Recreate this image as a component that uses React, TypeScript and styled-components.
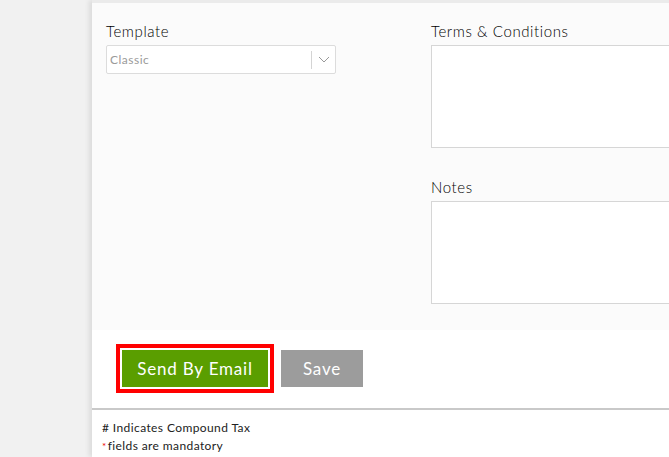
import React from "react";
import styled, { createGlobalStyle } from "styled-components";

const Global = createGlobalStyle`
  html, body { margin: 0; padding: 0; }
  body {
    background: #f1f1f1;
    font-family: Lato, "Open Sans", "Liberation Sans", sans-serif;
    overflow: hidden;
    width: 669px;
    height: 457px;
  }
`;

const Page = styled.div`
  display: flex;
  height: 457px;
  width: 669px;
  overflow: hidden;
`;

const Gutter = styled.div`
  width: 92px;
  flex: none;
  background: #f1f1f1;
`;

const Panel = styled.div`
  flex: 1;
  min-width: 0;
  display: flex;
  flex-direction: column;
  background: #ffffff;
  border-top: 3px solid #ebebeb;
  box-shadow: -3px 0 5px rgba(0, 0, 0, 0.09);
  overflow: hidden;
`;

const FormBody = styled.div`
  background: #fbfbfb;
  padding: 19px 0 26px 14px;
  display: grid;
  grid-template-columns: 230px 300px;
  column-gap: 95px;
  align-items: start;
`;

const Column = styled.div`
  display: flex;
  flex-direction: column;
`;

const Label = styled.label<{ $spaced?: boolean }>`
  font-size: 15px;
  line-height: 18px;
  font-weight: 300;
  color: #000;
  letter-spacing: 0.6px;
  margin-top: ${(p) => (p.$spaced ? "30px" : "0")};
  margin-bottom: 5px;
`;

const Select = styled.div`
  height: 29px;
  box-sizing: border-box;
  border: 1px solid #dcdcdc;
  border-radius: 2px;
  background: #fff;
  display: flex;
  align-items: center;
`;

const SelectText = styled.span`
  flex: 1;
  font-size: 12px;
  color: #9a9a9a;
  padding-left: 3px;
  letter-spacing: 0.5px;
`;

const Caret = styled.span`
  width: 23px;
  height: 18px;
  border-left: 1px solid #d4d4d4;
  display: flex;
  align-items: center;
  justify-content: center;
`;

const TextArea = styled.div<{ $h: number }>`
  height: ${(p) => p.$h}px;
  box-sizing: border-box;
  border: 1px solid #d6d6d6;
  background: #fff;
  width: 300px;
`;

const ButtonBar = styled.div`
  padding: 20px 0 21px 30px;
  display: flex;
  align-items: center;
  gap: 13px;
  border-bottom: 2px solid #c9c9c9;
`;

const Button = styled.button<{ $primary?: boolean }>`
  height: 37px;
  border: none;
  border-radius: 0;
  font-family: inherit;
  font-size: 17px;
  letter-spacing: 0.8px;
  color: #fff;
  background: ${(p) => (p.$primary ? "#5a9e00" : "#9c9c9c")};
  padding: 0;
  width: ${(p) => (p.$primary ? "146px" : "82px")};
  cursor: pointer;
  ${(p) => p.$primary && `outline: 4px solid #ff0000; outline-offset: 2px;`}
`;

const Footer = styled.div`
  padding: 9px 10px;
  font-size: 12px;
  line-height: 18px;
  letter-spacing: 0.4px;
  color: #222;
`;

const Star = styled.span`
  color: #e00;
  font-size: 10px;
  vertical-align: top;
  margin-right: 1px;
`;

export default function App() {
  return (
    <>
      <Global />
      <Page>
        <Gutter />
        <Panel>
          <FormBody>
            <Column>
              <Label>Template</Label>
              <Select>
                <SelectText>Classic</SelectText>
                <Caret>
                  <svg width="12" height="7" viewBox="0 0 12 7">
                    <path d="M1 1l5 5 5-5" fill="none" stroke="#999" strokeWidth="1" />
                  </svg>
                </Caret>
              </Select>
            </Column>
            <Column>
              <Label>Terms &amp; Conditions</Label>
              <TextArea $h={103} />
              <Label $spaced>Notes</Label>
              <TextArea $h={103} />
            </Column>
          </FormBody>
          <ButtonBar>
            <Button $primary>Send By Email</Button>
            <Button>Save</Button>
          </ButtonBar>
          <Footer>
            <div># Indicates Compound Tax</div>
            <div>
              <Star>*</Star>fields are mandatory
            </div>
          </Footer>
        </Panel>
      </Page>
    </>
  );
}
